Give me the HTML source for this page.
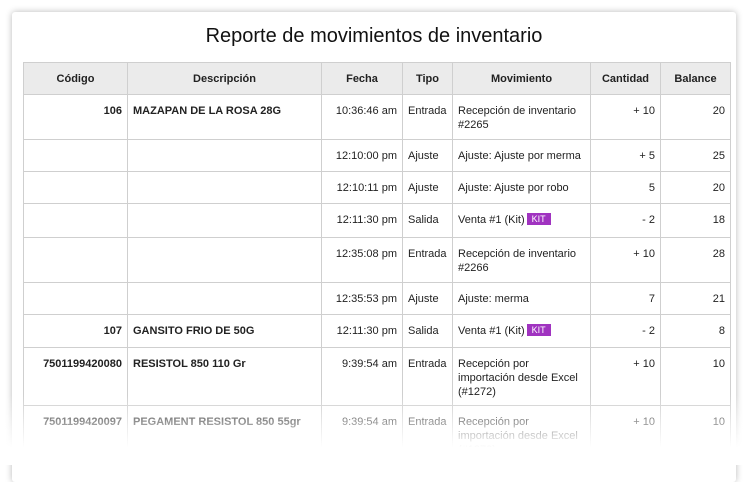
<!DOCTYPE html>
<html><head><meta charset="utf-8"><style>
body{margin:0;width:748px;height:465px;background:#fff;position:relative;overflow:hidden;font-family:"Liberation Sans",sans-serif;}
.card{position:absolute;left:12px;top:12px;width:724px;height:470px;background:#fff;box-shadow:0 0 7px rgba(0,0,0,.28);border-radius:3px;}
h1{position:absolute;left:0;width:748px;top:25px;margin:0;text-align:center;font-weight:normal;font-size:20px;color:#111;}
.wrap{position:absolute;left:23px;top:62px;width:710px;height:385px;overflow:hidden;}
table{border-collapse:collapse;font-size:11px;color:#222;table-layout:fixed;}
td,th{border:1px solid #cfcfcf;padding:0 5px;vertical-align:top;overflow:hidden;}
th{background:#ebebeb;font-weight:bold;height:31px;vertical-align:middle;font-size:11px;}
td{padding-top:9px;line-height:14px;}
.r{text-align:right}
.b{font-weight:bold}
.n{white-space:nowrap}
.kit{display:inline-block;background:#a033c0;color:#fff;font-size:9px;padding:0 5px;line-height:12px;margin-left:2px;vertical-align:1px;}
.fade{position:absolute;left:0;top:395px;width:748px;height:70px;background:linear-gradient(rgba(255,255,255,0),#fff 75%);}
</style></head><body>
<div class="card"></div>
<h1>Reporte de movimientos de inventario</h1>
<div class="wrap">
<table>
<colgroup><col style="width:104px"><col style="width:194px"><col style="width:81px"><col style="width:50px"><col style="width:138px"><col style="width:70px"><col style="width:70px"></colgroup>
<tr><th>Código</th><th>Descripción</th><th>Fecha</th><th>Tipo</th><th>Movimiento</th><th>Cantidad</th><th>Balance</th></tr>
<tr style="height:45px"><td class="r b">106</td><td class="b">MAZAPAN DE LA ROSA 28G</td><td class="r">10:36:46 am</td><td>Entrada</td><td>Recepción de inventario #2265</td><td class="r">+ 10</td><td class="r">20</td></tr>
<tr style="height:32px"><td></td><td></td><td class="r">12:10:00 pm</td><td>Ajuste</td><td class="n">Ajuste: Ajuste por merma</td><td class="r">+ 5</td><td class="r">25</td></tr>
<tr style="height:32px"><td></td><td></td><td class="r">12:10:11 pm</td><td>Ajuste</td><td class="n">Ajuste: Ajuste por robo</td><td class="r">5</td><td class="r">20</td></tr>
<tr style="height:34px"><td></td><td></td><td class="r">12:11:30 pm</td><td>Salida</td><td class="n">Venta #1 (Kit)<span class="kit">KIT</span></td><td class="r">- 2</td><td class="r">18</td></tr>
<tr style="height:45px"><td></td><td></td><td class="r">12:35:08 pm</td><td>Entrada</td><td>Recepción de inventario #2266</td><td class="r">+ 10</td><td class="r">28</td></tr>
<tr style="height:32px"><td></td><td></td><td class="r">12:35:53 pm</td><td>Ajuste</td><td>Ajuste: merma</td><td class="r">7</td><td class="r">21</td></tr>
<tr style="height:33px"><td class="r b">107</td><td class="b">GANSITO FRIO DE 50G</td><td class="r">12:11:30 pm</td><td>Salida</td><td class="n">Venta #1 (Kit)<span class="kit">KIT</span></td><td class="r">- 2</td><td class="r">8</td></tr>
<tr style="height:58px"><td class="r b">7501199420080</td><td class="b">RESISTOL 850 110 Gr</td><td class="r">9:39:54 am</td><td>Entrada</td><td>Recepción por importación desde Excel (#1272)</td><td class="r">+ 10</td><td class="r">10</td></tr>
<tr style="height:58px"><td class="r b">7501199420097</td><td class="b">PEGAMENT RESISTOL 850 55gr</td><td class="r">9:39:54 am</td><td>Entrada</td><td>Recepción por importación desde Excel (#1273)</td><td class="r">+ 10</td><td class="r">10</td></tr>
</table>
</div>
<div class="fade"></div>
</body></html>
